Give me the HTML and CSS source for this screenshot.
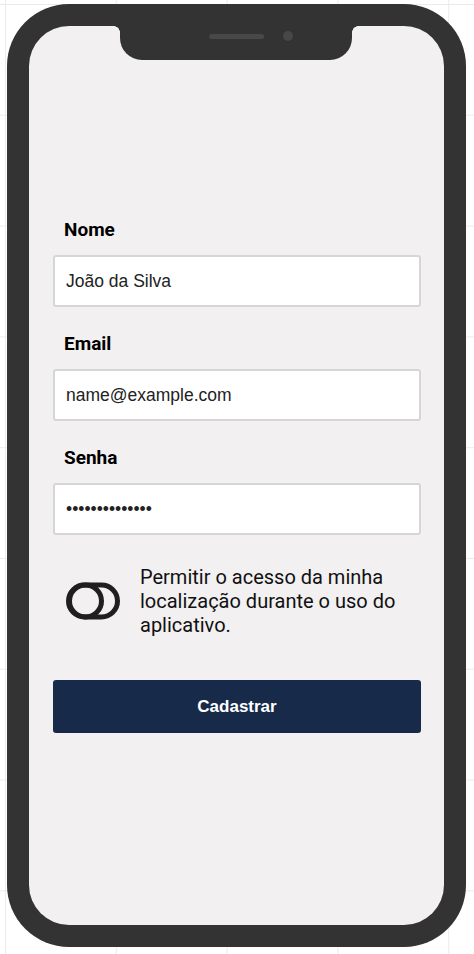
FILE: index.html
```html
<!DOCTYPE html>
<html lang="pt-BR">
<head>
<meta charset="utf-8">
<title>Cadastro</title>
<link rel="stylesheet" href="styles.css">
</head>
<body>
<div class="phone">
  <div class="notch">
    <span class="speaker"></span>
    <span class="camera"></span>
  </div>
  <div class="screen">
    <form class="form">
      <div class="field">
        <label class="label">Nome</label>
        <input class="input" type="text" value="João da Silva" readonly>
      </div>
      <div class="field">
        <label class="label">Email</label>
        <input class="input" type="text" value="name@example.com" readonly>
      </div>
      <div class="field">
        <label class="label">Senha</label>
        <input class="input" type="text" value="••••••••••••••" readonly>
      </div>
      <div class="toggle-row">
        <svg class="toggle" width="54" height="38" viewBox="0 0 54 38" aria-hidden="true">
          <rect x="2.5" y="3" width="49" height="32" rx="16" ry="16" fill="none" stroke="#1f1f1f" stroke-width="5"/>
          <circle cx="19.5" cy="19" r="16" fill="none" stroke="#1f1f1f" stroke-width="5"/>
        </svg>
        <p class="toggle-text">Permitir o acesso da minha localização durante o uso do aplicativo.</p>
      </div>
      <button class="btn" type="button">Cadastrar</button>
    </form>
  </div>
</div>
</body>
</html>
```

FILE: styles.css
```css
* { box-sizing: border-box; }

html, body {
  margin: 0;
  padding: 0;
}

body {
  width: 474px;
  height: 954px;
  overflow: hidden;
  background-color: #ffffff;
  background-image:
    linear-gradient(to right, #ebebeb 1px, transparent 1px),
    linear-gradient(to bottom, #ebebeb 1px, transparent 1px);
  background-size: 110.8px 110.8px;
  background-position: 5px 4px;
  padding: 4px 0 0 7px;
}

.phone {
  position: relative;
  width: 459px;
  height: 943px;
  background: #333333;
  border-radius: 62px;
  padding: 22px;
}

.notch {
  position: absolute;
  left: 113px;
  top: 0;
  width: 232px;
  height: 56px;
  background: #333333;
  border-radius: 0 0 22px 22px;
  z-index: 2;
}

.notch::before,
.notch::after {
  content: "";
  position: absolute;
  top: 22px;
  width: 6px;
  height: 6px;
}
.notch::before {
  left: -6px;
  background: radial-gradient(circle at 0 100%, transparent 5.5px, #333333 6px);
}
.notch::after {
  right: -6px;
  background: radial-gradient(circle at 100% 100%, transparent 5.5px, #333333 6px);
}

.speaker {
  position: absolute;
  left: 89px;
  top: 30px;
  width: 55px;
  height: 5px;
  border-radius: 3px;
  background: #484848;
}

.camera {
  position: absolute;
  left: 163px;
  top: 27px;
  width: 10px;
  height: 10px;
  border-radius: 50%;
  background: #484848;
}

.screen {
  width: 415px;
  height: 899px;
  background: #f2f0f1;
  border-radius: 40px;
  padding: 192px 23px 0 24px;
}

.form {
  display: flex;
  flex-direction: column;
}

.field {
  display: flex;
  flex-direction: column;
  gap: 13px;
  margin-bottom: 25px;
}

.label {
  font-family: Roboto, "Liberation Sans", sans-serif;
  font-weight: 700;
  font-size: 19px;
  line-height: 24px;
  color: #000;
  padding-left: 11px;
}

.input {
  display: block;
  width: 100%;
  height: 52px;
  margin: 0;
  border: 2px solid #d6d6d6;
  border-radius: 3px;
  background: #ffffff;
  padding: 0 11px;
  font-family: "Liberation Sans", Arial, sans-serif;
  font-size: 17.5px;
  color: #222222;
  outline: none;
}

.toggle-row {
  display: flex;
  align-items: center;
  gap: 20px;
  padding-left: 13px;
  margin-top: 5px;
}

.toggle {
  flex: none;
  display: block;
}

.toggle-text {
  margin: 0;
  font-family: Roboto, "Liberation Sans", sans-serif;
  font-size: 20px;
  line-height: 24px;
  color: #111111;
  width: 275px;
}

.btn {
  margin-top: 43px;
  height: 53px;
  width: 100%;
  border: none;
  border-radius: 3px;
  background: #172a4a;
  color: #ffffff;
  font-family: "Liberation Sans", Arial, sans-serif;
  font-weight: 700;
  font-size: 17px;
  cursor: pointer;
}
```
